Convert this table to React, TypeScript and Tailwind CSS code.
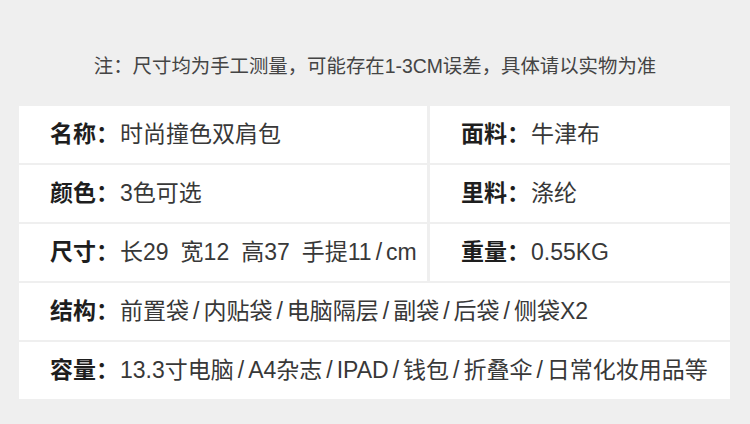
import React from 'react';

interface Spec {
  label: string;
  value: string;
}

const pairs: [Spec, Spec][] = [
  [
    { label: '名称', value: '时尚撞色双肩包' },
    { label: '面料', value: '牛津布' },
  ],
  [
    { label: '颜色', value: '3色可选' },
    { label: '里料', value: '涤纶' },
  ],
  [
    { label: '尺寸', value: '长29 宽12 高37 手提11/cm' },
    { label: '重量', value: '0.55KG' },
  ],
];

const wide: Spec[] = [
  { label: '结构', value: '前置袋/内贴袋/电脑隔层/副袋/后袋/侧袋X2' },
  { label: '容量', value: '13.3寸电脑/A4杂志/IPAD/钱包/折叠伞/日常化妆用品等' },
];

const font = { fontFamily: '"Liberation Sans", "Noto Sans CJK SC", sans-serif' };

// slashes and spaces in the source art are set wider than Arial's
const renderValue = (text: string) =>
  text.split(/([/ ])/).map((part, i) => {
    if (part === '/') return <span key={i} className="px-[4px]">/</span>;
    if (part === ' ') return <span key={i} className="inline-block w-[12px]" />;
    return <React.Fragment key={i}>{part}</React.Fragment>;
  });

const Cell: React.FC<{ spec: Spec; className?: string }> = ({ spec, className }) => (
  <div className={`bg-white h-full flex items-center pl-[31px] text-[23px] whitespace-nowrap ${className ?? ''}`}>
    <span className="font-bold text-[#1e1e1e]">{spec.label}：</span>
    <span className="text-[#383838] ml-[1px]">{renderValue(spec.value)}</span>
  </div>
);

export default function App() {
  return (
    <div className="w-[750px] h-[424px] bg-[#efefef] overflow-hidden" style={font}>
      {/* Note */}
      <div className="h-[106px] flex items-center justify-center pt-[40px] pb-[12px]">
        <p className="text-[19.4px] text-[#444444]">注：尺寸均为手工测量，可能存在1-3CM误差，具体请以实物为准</p>
      </div>

      {/* Spec table */}
      <div className="ml-[19px] w-[711px] flex flex-col gap-[2px]">
        {pairs.map(([left, right]) => (
          <div key={left.label} className="h-[57px] flex gap-[3px]">
            <Cell spec={left} className="w-[408px]" />
            <Cell spec={right} className="flex-1" />
          </div>
        ))}
        {wide.map((spec) => (
          <div key={spec.label} className="h-[57px]">
            <Cell spec={spec} />
          </div>
        ))}
      </div>
    </div>
  );
}
